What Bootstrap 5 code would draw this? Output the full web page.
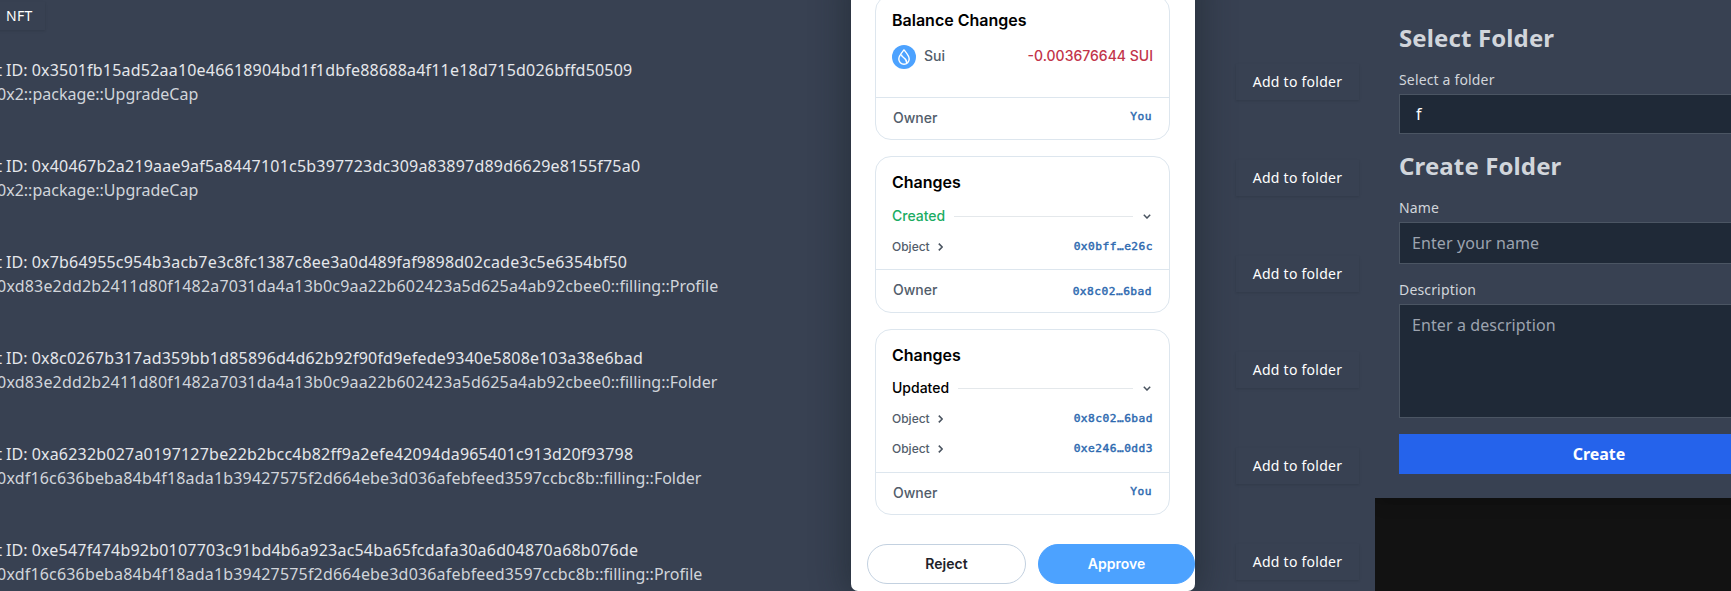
<!DOCTYPE html>
<html lang="en" data-bs-theme="light">
<head>
<meta charset="utf-8">
<meta name="viewport" content="width=device-width, initial-scale=1">
<title>NFT folders</title>
<link href="https://cdn.jsdelivr.net/npm/bootstrap@5.3.0/dist/css/bootstrap.min.css" rel="stylesheet">
<style>
body{background:#384152;font-family:"Noto Sans","Open Sans",sans-serif;height:591px;overflow:hidden}
.assets{width:1375px;height:591px;background:#384152}
.tabs-row{height:34px}
.flat-btn,.flat-btn:hover{background:#384152;border:0;border-radius:0;color:#fff;font-size:14px;font-weight:400;line-height:20px;letter-spacing:.26px;height:36px;box-shadow:0 1px 3px rgba(0,0,0,.08),0 1px 2px rgba(0,0,0,.04)}
.nft-btn,.nft-btn:hover{width:65px;height:28px;margin-left:-20px;margin-top:2px;padding:4px 12px 4px 26px;text-align:left}
.add-btn{width:123px;padding:8px 0;margin-right:16px;flex:none}
.asset-row{height:96px;font-size:16px;line-height:24px;white-space:nowrap;color:#e5e7eb}
.asset-text{margin-left:-47px}
.asset-text .kind{color:#d1d5db}
.hex{letter-spacing:.205px}
.kind .hex{letter-spacing:.175px}
.side-col{width:356px;height:591px;background:#121212;overflow:hidden}
.folder-panel{width:448px;height:498px;padding:22px 24px 24px;background:#384152;box-shadow:0 10px 15px -3px rgba(0,0,0,.12),0 4px 6px -2px rgba(0,0,0,.06)}
.folder-panel h2{font-size:24px;line-height:32px;font-weight:700;letter-spacing:.12px;color:#d1d5db;margin:0 0 16px}
.folder-panel label{display:block;font-size:14px;line-height:20px;letter-spacing:.16px;color:#d1d5db;margin-bottom:4px}
.folder-panel .form-control,.folder-panel .pick{display:block;width:400px;background:#1f2937;border:1px solid #4b5563;border-radius:0;color:#fff;font-size:16px;line-height:24px;letter-spacing:.1px;padding:8px 12px;margin-bottom:16px}
.folder-panel .pick{height:40px;padding:7px 16px}
.folder-panel .form-control{height:42px}
.folder-panel textarea.form-control{height:114px;resize:none}
.folder-panel ::placeholder{color:#9ca3af;opacity:1}
.create-btn{width:400px;height:40px;border:0;border-radius:0;background:#2563eb;color:#fff;font-weight:700;font-size:16px;line-height:24px;padding:8px}
.wallet{left:851px;top:-29px;width:344px;height:620px;background:#fff;border-radius:7px;padding:24px 0 0 24px;box-shadow:0 0 34px 6px rgba(20,28,34,.42);font-family:Inter,sans-serif;color:#000}
.wcard{width:295px;border:1px solid #dde6ee;border-radius:16px}
.wcard h3{font-size:16px;line-height:20px;font-weight:600;margin:0}
.wbody{padding:0 16px}
.wfoot{border-top:1px solid #dde6ee;padding:0 17px 3px;flex:1}
.steel{color:#525d6b;font-weight:500;font-size:14px}
.obj{color:#525d6b;font-size:12px;font-weight:500;height:30px}
.hash{font-family:"DejaVu Sans Mono",monospace;font-size:11.2px;letter-spacing:.48px;-webkit-text-stroke:.45px #2e6ab0;color:#2e6ab0;line-height:16px}
.grouphead{font-size:14px;font-weight:500;line-height:20px;height:20px}
.rule{height:1px;background:#e4e8eb;flex:1;margin:0 10px 0 9px}
.wbtn{height:40px;border-radius:20px;font-size:14px;font-weight:600;border:1px solid #c3d1e0;background:#fff;padding:0 0 1px;color:#1e2329}
.wbtn.go{background:#4ca2ff;border-color:#4ca2ff;color:#fff}
</style>
</head>
<body>
<div class="d-flex">
  <main class="assets flex-shrink-0">
    <div class="tabs-row d-flex align-items-start"><button class="btn flat-btn nft-btn">NFT</button></div>
    <div class="asset-row d-flex align-items-center justify-content-between"><div class="asset-text"><div>Object ID: <span class="hex">0x3501fb15ad52aa10e46618904bd1f1dbfe88688a4f11e18d715d026bffd50509</span></div><div class="kind">Type: 0x2::package::UpgradeCap</div></div><button class="btn flat-btn add-btn">Add to folder</button></div>
    <div class="asset-row d-flex align-items-center justify-content-between"><div class="asset-text"><div>Object ID: <span class="hex">0x40467b2a219aae9af5a8447101c5b397723dc309a83897d89d6629e8155f75a0</span></div><div class="kind">Type: 0x2::package::UpgradeCap</div></div><button class="btn flat-btn add-btn">Add to folder</button></div>
    <div class="asset-row d-flex align-items-center justify-content-between"><div class="asset-text"><div>Object ID: <span class="hex">0x7b64955c954b3acb7e3c8fc1387c8ee3a0d489faf9898d02cade3c5e6354bf50</span></div><div class="kind">Type: <span class="hex">0xd83e2dd2b2411d80f1482a7031da4a13b0c9aa22b602423a5d625a4ab92cbee0</span>::filling::Profile</div></div><button class="btn flat-btn add-btn">Add to folder</button></div>
    <div class="asset-row d-flex align-items-center justify-content-between"><div class="asset-text"><div>Object ID: <span class="hex">0x8c0267b317ad359bb1d85896d4d62b92f90fd9efede9340e5808e103a38e6bad</span></div><div class="kind">Type: <span class="hex">0xd83e2dd2b2411d80f1482a7031da4a13b0c9aa22b602423a5d625a4ab92cbee0</span>::filling::Folder</div></div><button class="btn flat-btn add-btn">Add to folder</button></div>
    <div class="asset-row d-flex align-items-center justify-content-between"><div class="asset-text"><div>Object ID: <span class="hex">0xa6232b027a0197127be22b2bcc4b82ff9a2efe42094da965401c913d20f93798</span></div><div class="kind">Type: <span class="hex">0xdf16c636beba84b4f18ada1b39427575f2d664ebe3d036afebfeed3597ccbc8b</span>::filling::Folder</div></div><button class="btn flat-btn add-btn">Add to folder</button></div>
    <div class="asset-row d-flex align-items-center justify-content-between"><div class="asset-text"><div>Object ID: <span class="hex">0xe547f474b92b0107703c91bd4b6a923ac54ba65fcdafa30a6d04870a68b076de</span></div><div class="kind">Type: <span class="hex">0xdf16c636beba84b4f18ada1b39427575f2d664ebe3d036afebfeed3597ccbc8b</span>::filling::Profile</div></div><button class="btn flat-btn add-btn">Add to folder</button></div>
  </main>
  <aside class="side-col flex-shrink-0">
    <div class="folder-panel">
      <h2>Select Folder</h2>
      <label for="pick">Select a folder</label>
      <div class="pick" id="pick">f</div>
      <h2>Create Folder</h2>
      <label for="nm">Name</label>
      <input id="nm" class="form-control" placeholder="Enter your name">
      <label for="ds">Description</label>
      <textarea id="ds" class="form-control" placeholder="Enter a description"></textarea>
      <button class="btn create-btn">Create</button>
    </div>
  </aside>
</div>

<section class="wallet position-absolute">
  <div class="wcard d-flex flex-column" style="height:145px">
    <div class="wbody" style="height:101px;padding-top:14px">
      <h3>Balance Changes</h3>
      <div class="d-flex align-items-center steel" style="margin-top:15px;height:24px">
        <svg width="24" height="24" viewBox="0 0 24 24" class="me-2"><circle cx="12" cy="12" r="12" fill="#4ca2ff"/><path d="M12 4.9C10.3 7.2 6.8 10.6 6.8 14.1a5.2 5.2 0 0 0 10.4 0C17.2 10.6 13.7 7.2 12 4.9Z" fill="none" stroke="#fff" stroke-width="1.4" stroke-linejoin="round"/><path d="M9.4 9.4C9.4 12.9 15.3 13 14.7 18" fill="none" stroke="#fff" stroke-width="1.4"/></svg>
        <span class="pb-1">Sui</span><span class="ms-auto pb-1" style="color:#c2344a">-0.003676644 SUI</span>
      </div>
    </div>
    <div class="wfoot d-flex align-items-center justify-content-between"><span class="steel">Owner</span><span class="hash">You</span></div>
  </div>

  <div class="wcard d-flex flex-column" style="height:157px;margin-top:16px">
    <div class="wbody" style="height:112px;padding-top:15px">
      <h3>Changes</h3>
      <div class="grouphead d-flex align-items-center" style="margin-top:14px"><span style="color:#1aac63">Created</span><i class="rule"></i><svg width="8" height="5" viewBox="0 0 8 5" style="margin-right:2px"><path d="M.8.8 4 4 7.2.8" fill="none" stroke="#49535f" stroke-width="1.5"/></svg></div>
      <div class="obj d-flex align-items-center" style="margin-top:6px"><span>Object</span><svg class="ms-2" width="5" height="8" viewBox="0 0 5 8"><path d="M.8.6 4.2 4 .8 7.4" fill="none" stroke="#49535f" stroke-width="1.6"/></svg><span class="hash ms-auto">0x0bff…e26c</span></div>
    </div>
    <div class="wfoot d-flex align-items-center justify-content-between"><span class="steel">Owner</span><span class="hash pt-1">0x8c02…6bad</span></div>
  </div>

  <div class="wcard d-flex flex-column" style="height:186px;margin-top:16px">
    <div class="wbody" style="height:142px;padding-top:15px">
      <h3>Changes</h3>
      <div class="grouphead d-flex align-items-center" style="margin-top:13px"><span>Updated</span><i class="rule"></i><svg width="8" height="5" viewBox="0 0 8 5" style="margin-right:2px"><path d="M.8.8 4 4 7.2.8" fill="none" stroke="#49535f" stroke-width="1.5"/></svg></div>
      <div class="obj d-flex align-items-center" style="margin-top:6px"><span>Object</span><svg class="ms-2" width="5" height="8" viewBox="0 0 5 8"><path d="M.8.6 4.2 4 .8 7.4" fill="none" stroke="#49535f" stroke-width="1.6"/></svg><span class="hash ms-auto">0x8c02…6bad</span></div>
      <div class="obj d-flex align-items-center"><span>Object</span><svg class="ms-2" width="5" height="8" viewBox="0 0 5 8"><path d="M.8.6 4.2 4 .8 7.4" fill="none" stroke="#49535f" stroke-width="1.6"/></svg><span class="hash ms-auto">0xe246…0dd3</span></div>
    </div>
    <div class="wfoot d-flex align-items-center justify-content-between"><span class="steel">Owner</span><span class="hash">You</span></div>
  </div>
  <div class="d-flex" style="margin:29px 0 0 -8px;gap:12px"><button class="btn wbtn" style="width:159px">Reject</button><button class="btn wbtn go" style="width:157px">Approve</button></div>
</section>
<script src="https://cdn.jsdelivr.net/npm/bootstrap@5.3.0/dist/js/bootstrap.bundle.min.js"></script>
</body>
</html>
